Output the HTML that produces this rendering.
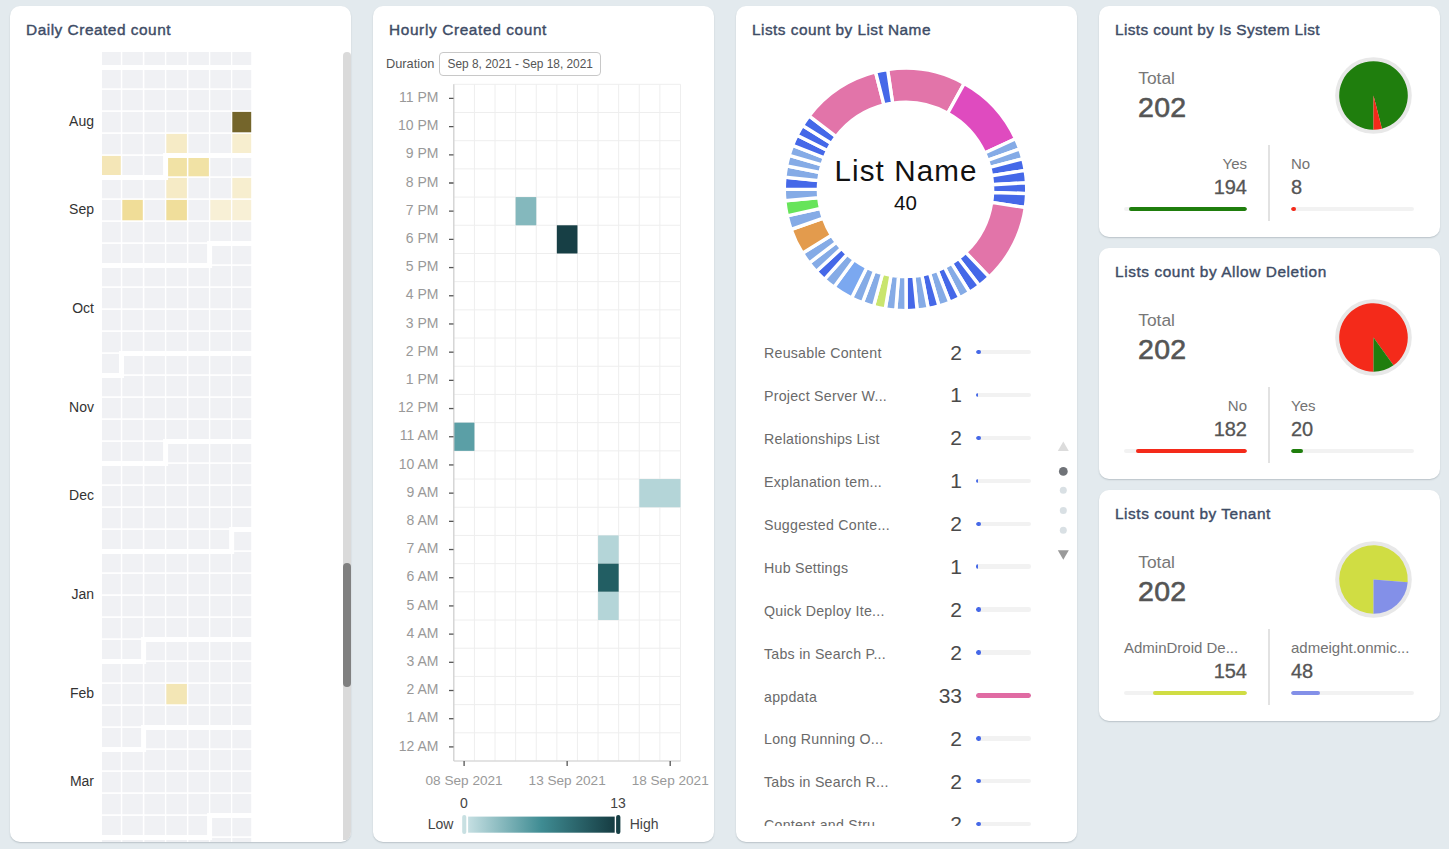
<!DOCTYPE html><html><head><meta charset="utf-8"><style>
*{box-sizing:border-box;margin:0;padding:0}
html,body{width:1449px;height:849px;overflow:hidden;background:#e3eaee;font-family:"Liberation Sans",sans-serif}
.card{position:absolute;background:#fff;border-radius:10px;overflow:hidden;box-shadow:0 1px 1.5px rgba(40,60,70,0.22)}
.title{position:absolute;left:16px;top:15px;font-size:15.4px;color:#3e4c66;-webkit-text-stroke:0.4px #3e4c66;white-space:nowrap}
.abs{position:absolute;left:0;top:0}
.clip1{position:absolute;left:0;top:46px;width:333px;height:790px;overflow:hidden}
.cal{position:absolute;left:0;top:-46px}
.mlab{position:absolute;left:0;width:84px;text-align:right;font-size:14px;color:#333;line-height:18px;margin-top:-46px}
.sbtrack{position:absolute;left:333px;top:46px;width:8px;height:788px;background:#dadada;border-radius:4px 4px 0 0}
.sbthumb{position:absolute;left:333px;top:557px;width:8px;height:124px;background:#808080;border-radius:4px}
.ylab{font-size:14px;fill:#999}
.xlab{font-size:13.6px;fill:#999}
.leg{font-size:14px;fill:#444}
.dur{position:absolute;left:13px;top:50px;font-size:12.8px;color:#555;line-height:16px}
.durbox{position:absolute;left:66px;top:46px;width:162px;height:24px;border:1px solid #c8c8c8;border-radius:4px;font-size:11.9px;color:#555;line-height:22px;padding-left:7.5px;white-space:nowrap}
.dn1{font-size:29.6px;fill:#111;letter-spacing:1.1px}
.dn2{font-size:20.5px;fill:#111}
.lclip{position:absolute;left:0;top:300px;width:341px;height:520px;overflow:hidden}
.lrow{position:absolute;left:0;width:341px;height:24px;margin-top:-300px}
.lname{position:absolute;left:28px;top:3px;font-size:14.2px;letter-spacing:0.25px;color:#6a6a6a;white-space:nowrap;line-height:18px}
.lval{position:absolute;right:115px;top:-0.8px;font-size:21px;color:#4a4a4a;line-height:24px}
.btrack{position:absolute;left:240px;top:8.7px;width:55px;height:4.5px;background:#f2f2f2;border-radius:2.25px;overflow:hidden}
.bfill{position:absolute;left:0;top:0;height:4.5px;border-radius:2.25px}
.tot{position:absolute;left:39.2px;top:62px;font-size:17.4px;color:#777;line-height:20px}
.totv{position:absolute;left:39px;top:85.4px;font-size:28.5px;color:#555;-webkit-text-stroke:0.6px #555;line-height:32px;letter-spacing:0.3px}
.pie{position:absolute;left:235.5px;top:50.5px;width:77px;height:77px}
.divider{position:absolute;left:169px;top:139px;width:2px;height:76px;background:#e2e2e2}
.sn{position:absolute;top:149px;font-size:15px;color:#737373;line-height:18px;white-space:nowrap}
.sv{position:absolute;top:169px;font-size:20px;color:#555;-webkit-text-stroke:0.3px #555;line-height:24px}
.sl{right:193px;text-align:right}
.sr{left:192px}
.strack{position:absolute;top:201px;width:123px;height:4px;background:#f2f2f2;border-radius:2px;overflow:hidden}
.sfill{position:absolute;top:0;height:4px;border-radius:2px}
</style></head><body><div class="card" style="left:10px;top:6px;width:341px;height:836px;"><div class="title" style="letter-spacing:0.52px">Daily Created count</div><div class="clip1"><svg class="cal" width="341" height="836" viewBox="0 0 341 836"><rect x="92.00" y="39.90" width="18.80" height="20.40" fill="#f0f1f4"/><rect x="112.30" y="39.90" width="20.50" height="20.40" fill="#f0f1f4"/><rect x="134.40" y="39.90" width="20.50" height="20.40" fill="#f0f1f4"/><rect x="156.30" y="39.90" width="20.60" height="20.40" fill="#f0f1f4"/><rect x="178.40" y="39.90" width="20.50" height="20.40" fill="#f0f1f4"/><rect x="200.30" y="39.90" width="20.70" height="20.40" fill="#f0f1f4"/><rect x="222.30" y="39.90" width="18.90" height="20.40" fill="#f0f1f4"/><rect x="92.00" y="61.90" width="18.80" height="20.40" fill="#f0f1f4"/><rect x="112.30" y="61.90" width="20.50" height="20.40" fill="#f0f1f4"/><rect x="134.40" y="61.90" width="20.50" height="20.40" fill="#f0f1f4"/><rect x="156.30" y="61.90" width="20.60" height="20.40" fill="#f0f1f4"/><rect x="178.40" y="61.90" width="20.50" height="20.40" fill="#f0f1f4"/><rect x="200.30" y="61.90" width="20.70" height="20.40" fill="#f0f1f4"/><rect x="222.30" y="61.90" width="18.90" height="20.40" fill="#f0f1f4"/><rect x="92.00" y="83.90" width="18.80" height="20.40" fill="#f0f1f4"/><rect x="112.30" y="83.90" width="20.50" height="20.40" fill="#f0f1f4"/><rect x="134.40" y="83.90" width="20.50" height="20.40" fill="#f0f1f4"/><rect x="156.30" y="83.90" width="20.60" height="20.40" fill="#f0f1f4"/><rect x="178.40" y="83.90" width="20.50" height="20.40" fill="#f0f1f4"/><rect x="200.30" y="83.90" width="20.70" height="20.40" fill="#f0f1f4"/><rect x="222.30" y="83.90" width="18.90" height="20.40" fill="#f0f1f4"/><rect x="92.00" y="105.90" width="18.80" height="20.40" fill="#f0f1f4"/><rect x="112.30" y="105.90" width="20.50" height="20.40" fill="#f0f1f4"/><rect x="134.40" y="105.90" width="20.50" height="20.40" fill="#f0f1f4"/><rect x="156.30" y="105.90" width="20.60" height="20.40" fill="#f0f1f4"/><rect x="178.40" y="105.90" width="20.50" height="20.40" fill="#f0f1f4"/><rect x="200.30" y="105.90" width="20.70" height="20.40" fill="#f0f1f4"/><rect x="222.30" y="105.90" width="18.90" height="20.40" fill="#74652b"/><rect x="92.00" y="127.90" width="18.80" height="20.40" fill="#f0f1f4"/><rect x="112.30" y="127.90" width="20.50" height="20.40" fill="#f0f1f4"/><rect x="134.40" y="127.90" width="20.50" height="20.40" fill="#f0f1f4"/><rect x="156.30" y="127.90" width="20.60" height="20.40" fill="#f6ebc6"/><rect x="178.40" y="127.90" width="20.50" height="20.40" fill="#f0f1f4"/><rect x="200.30" y="127.90" width="20.70" height="20.40" fill="#f0f1f4"/><rect x="222.30" y="127.90" width="18.90" height="20.40" fill="#f7eecf"/><rect x="92.00" y="149.90" width="18.80" height="20.40" fill="#f4e6b7"/><rect x="112.30" y="149.90" width="20.50" height="20.40" fill="#f0f1f4"/><rect x="134.40" y="149.90" width="20.50" height="20.40" fill="#f0f1f4"/><rect x="156.30" y="149.90" width="20.60" height="20.40" fill="#f1e2a5"/><rect x="178.40" y="149.90" width="20.50" height="20.40" fill="#f1e2a5"/><rect x="200.30" y="149.90" width="20.70" height="20.40" fill="#f0f1f4"/><rect x="222.30" y="149.90" width="18.90" height="20.40" fill="#f0f1f4"/><rect x="92.00" y="171.90" width="18.80" height="20.40" fill="#f0f1f4"/><rect x="112.30" y="171.90" width="20.50" height="20.40" fill="#f0f1f4"/><rect x="134.40" y="171.90" width="20.50" height="20.40" fill="#f0f1f4"/><rect x="156.30" y="171.90" width="20.60" height="20.40" fill="#f6ebc6"/><rect x="178.40" y="171.90" width="20.50" height="20.40" fill="#f0f1f4"/><rect x="200.30" y="171.90" width="20.70" height="20.40" fill="#f0f1f4"/><rect x="222.30" y="171.90" width="18.90" height="20.40" fill="#f7eecf"/><rect x="92.00" y="193.90" width="18.80" height="20.40" fill="#f0f1f4"/><rect x="112.30" y="193.90" width="20.50" height="20.40" fill="#f0dd98"/><rect x="134.40" y="193.90" width="20.50" height="20.40" fill="#f0f1f4"/><rect x="156.30" y="193.90" width="20.60" height="20.40" fill="#f0de9b"/><rect x="178.40" y="193.90" width="20.50" height="20.40" fill="#f0f1f4"/><rect x="200.30" y="193.90" width="20.70" height="20.40" fill="#f8f0d6"/><rect x="222.30" y="193.90" width="18.90" height="20.40" fill="#f8f0d6"/><rect x="92.00" y="215.90" width="18.80" height="20.40" fill="#f0f1f4"/><rect x="112.30" y="215.90" width="20.50" height="20.40" fill="#f0f1f4"/><rect x="134.40" y="215.90" width="20.50" height="20.40" fill="#f0f1f4"/><rect x="156.30" y="215.90" width="20.60" height="20.40" fill="#f0f1f4"/><rect x="178.40" y="215.90" width="20.50" height="20.40" fill="#f0f1f4"/><rect x="200.30" y="215.90" width="20.70" height="20.40" fill="#f0f1f4"/><rect x="222.30" y="215.90" width="18.90" height="20.40" fill="#f0f1f4"/><rect x="92.00" y="237.90" width="18.80" height="20.40" fill="#f0f1f4"/><rect x="112.30" y="237.90" width="20.50" height="20.40" fill="#f0f1f4"/><rect x="134.40" y="237.90" width="20.50" height="20.40" fill="#f0f1f4"/><rect x="156.30" y="237.90" width="20.60" height="20.40" fill="#f0f1f4"/><rect x="178.40" y="237.90" width="20.50" height="20.40" fill="#f0f1f4"/><rect x="200.30" y="237.90" width="20.70" height="20.40" fill="#f0f1f4"/><rect x="222.30" y="237.90" width="18.90" height="20.40" fill="#f0f1f4"/><rect x="92.00" y="259.90" width="18.80" height="20.40" fill="#f0f1f4"/><rect x="112.30" y="259.90" width="20.50" height="20.40" fill="#f0f1f4"/><rect x="134.40" y="259.90" width="20.50" height="20.40" fill="#f0f1f4"/><rect x="156.30" y="259.90" width="20.60" height="20.40" fill="#f0f1f4"/><rect x="178.40" y="259.90" width="20.50" height="20.40" fill="#f0f1f4"/><rect x="200.30" y="259.90" width="20.70" height="20.40" fill="#f0f1f4"/><rect x="222.30" y="259.90" width="18.90" height="20.40" fill="#f0f1f4"/><rect x="92.00" y="281.90" width="18.80" height="20.40" fill="#f0f1f4"/><rect x="112.30" y="281.90" width="20.50" height="20.40" fill="#f0f1f4"/><rect x="134.40" y="281.90" width="20.50" height="20.40" fill="#f0f1f4"/><rect x="156.30" y="281.90" width="20.60" height="20.40" fill="#f0f1f4"/><rect x="178.40" y="281.90" width="20.50" height="20.40" fill="#f0f1f4"/><rect x="200.30" y="281.90" width="20.70" height="20.40" fill="#f0f1f4"/><rect x="222.30" y="281.90" width="18.90" height="20.40" fill="#f0f1f4"/><rect x="92.00" y="303.90" width="18.80" height="20.40" fill="#f0f1f4"/><rect x="112.30" y="303.90" width="20.50" height="20.40" fill="#f0f1f4"/><rect x="134.40" y="303.90" width="20.50" height="20.40" fill="#f0f1f4"/><rect x="156.30" y="303.90" width="20.60" height="20.40" fill="#f0f1f4"/><rect x="178.40" y="303.90" width="20.50" height="20.40" fill="#f0f1f4"/><rect x="200.30" y="303.90" width="20.70" height="20.40" fill="#f0f1f4"/><rect x="222.30" y="303.90" width="18.90" height="20.40" fill="#f0f1f4"/><rect x="92.00" y="325.90" width="18.80" height="20.40" fill="#f0f1f4"/><rect x="112.30" y="325.90" width="20.50" height="20.40" fill="#f0f1f4"/><rect x="134.40" y="325.90" width="20.50" height="20.40" fill="#f0f1f4"/><rect x="156.30" y="325.90" width="20.60" height="20.40" fill="#f0f1f4"/><rect x="178.40" y="325.90" width="20.50" height="20.40" fill="#f0f1f4"/><rect x="200.30" y="325.90" width="20.70" height="20.40" fill="#f0f1f4"/><rect x="222.30" y="325.90" width="18.90" height="20.40" fill="#f0f1f4"/><rect x="92.00" y="347.90" width="18.80" height="20.40" fill="#f0f1f4"/><rect x="112.30" y="347.90" width="20.50" height="20.40" fill="#f0f1f4"/><rect x="134.40" y="347.90" width="20.50" height="20.40" fill="#f0f1f4"/><rect x="156.30" y="347.90" width="20.60" height="20.40" fill="#f0f1f4"/><rect x="178.40" y="347.90" width="20.50" height="20.40" fill="#f0f1f4"/><rect x="200.30" y="347.90" width="20.70" height="20.40" fill="#f0f1f4"/><rect x="222.30" y="347.90" width="18.90" height="20.40" fill="#f0f1f4"/><rect x="92.00" y="369.90" width="18.80" height="20.40" fill="#f0f1f4"/><rect x="112.30" y="369.90" width="20.50" height="20.40" fill="#f0f1f4"/><rect x="134.40" y="369.90" width="20.50" height="20.40" fill="#f0f1f4"/><rect x="156.30" y="369.90" width="20.60" height="20.40" fill="#f0f1f4"/><rect x="178.40" y="369.90" width="20.50" height="20.40" fill="#f0f1f4"/><rect x="200.30" y="369.90" width="20.70" height="20.40" fill="#f0f1f4"/><rect x="222.30" y="369.90" width="18.90" height="20.40" fill="#f0f1f4"/><rect x="92.00" y="391.90" width="18.80" height="20.40" fill="#f0f1f4"/><rect x="112.30" y="391.90" width="20.50" height="20.40" fill="#f0f1f4"/><rect x="134.40" y="391.90" width="20.50" height="20.40" fill="#f0f1f4"/><rect x="156.30" y="391.90" width="20.60" height="20.40" fill="#f0f1f4"/><rect x="178.40" y="391.90" width="20.50" height="20.40" fill="#f0f1f4"/><rect x="200.30" y="391.90" width="20.70" height="20.40" fill="#f0f1f4"/><rect x="222.30" y="391.90" width="18.90" height="20.40" fill="#f0f1f4"/><rect x="92.00" y="413.90" width="18.80" height="20.40" fill="#f0f1f4"/><rect x="112.30" y="413.90" width="20.50" height="20.40" fill="#f0f1f4"/><rect x="134.40" y="413.90" width="20.50" height="20.40" fill="#f0f1f4"/><rect x="156.30" y="413.90" width="20.60" height="20.40" fill="#f0f1f4"/><rect x="178.40" y="413.90" width="20.50" height="20.40" fill="#f0f1f4"/><rect x="200.30" y="413.90" width="20.70" height="20.40" fill="#f0f1f4"/><rect x="222.30" y="413.90" width="18.90" height="20.40" fill="#f0f1f4"/><rect x="92.00" y="435.90" width="18.80" height="20.40" fill="#f0f1f4"/><rect x="112.30" y="435.90" width="20.50" height="20.40" fill="#f0f1f4"/><rect x="134.40" y="435.90" width="20.50" height="20.40" fill="#f0f1f4"/><rect x="156.30" y="435.90" width="20.60" height="20.40" fill="#f0f1f4"/><rect x="178.40" y="435.90" width="20.50" height="20.40" fill="#f0f1f4"/><rect x="200.30" y="435.90" width="20.70" height="20.40" fill="#f0f1f4"/><rect x="222.30" y="435.90" width="18.90" height="20.40" fill="#f0f1f4"/><rect x="92.00" y="457.90" width="18.80" height="20.40" fill="#f0f1f4"/><rect x="112.30" y="457.90" width="20.50" height="20.40" fill="#f0f1f4"/><rect x="134.40" y="457.90" width="20.50" height="20.40" fill="#f0f1f4"/><rect x="156.30" y="457.90" width="20.60" height="20.40" fill="#f0f1f4"/><rect x="178.40" y="457.90" width="20.50" height="20.40" fill="#f0f1f4"/><rect x="200.30" y="457.90" width="20.70" height="20.40" fill="#f0f1f4"/><rect x="222.30" y="457.90" width="18.90" height="20.40" fill="#f0f1f4"/><rect x="92.00" y="479.90" width="18.80" height="20.40" fill="#f0f1f4"/><rect x="112.30" y="479.90" width="20.50" height="20.40" fill="#f0f1f4"/><rect x="134.40" y="479.90" width="20.50" height="20.40" fill="#f0f1f4"/><rect x="156.30" y="479.90" width="20.60" height="20.40" fill="#f0f1f4"/><rect x="178.40" y="479.90" width="20.50" height="20.40" fill="#f0f1f4"/><rect x="200.30" y="479.90" width="20.70" height="20.40" fill="#f0f1f4"/><rect x="222.30" y="479.90" width="18.90" height="20.40" fill="#f0f1f4"/><rect x="92.00" y="501.90" width="18.80" height="20.40" fill="#f0f1f4"/><rect x="112.30" y="501.90" width="20.50" height="20.40" fill="#f0f1f4"/><rect x="134.40" y="501.90" width="20.50" height="20.40" fill="#f0f1f4"/><rect x="156.30" y="501.90" width="20.60" height="20.40" fill="#f0f1f4"/><rect x="178.40" y="501.90" width="20.50" height="20.40" fill="#f0f1f4"/><rect x="200.30" y="501.90" width="20.70" height="20.40" fill="#f0f1f4"/><rect x="222.30" y="501.90" width="18.90" height="20.40" fill="#f0f1f4"/><rect x="92.00" y="523.90" width="18.80" height="20.40" fill="#f0f1f4"/><rect x="112.30" y="523.90" width="20.50" height="20.40" fill="#f0f1f4"/><rect x="134.40" y="523.90" width="20.50" height="20.40" fill="#f0f1f4"/><rect x="156.30" y="523.90" width="20.60" height="20.40" fill="#f0f1f4"/><rect x="178.40" y="523.90" width="20.50" height="20.40" fill="#f0f1f4"/><rect x="200.30" y="523.90" width="20.70" height="20.40" fill="#f0f1f4"/><rect x="222.30" y="523.90" width="18.90" height="20.40" fill="#f0f1f4"/><rect x="92.00" y="545.90" width="18.80" height="20.40" fill="#f0f1f4"/><rect x="112.30" y="545.90" width="20.50" height="20.40" fill="#f0f1f4"/><rect x="134.40" y="545.90" width="20.50" height="20.40" fill="#f0f1f4"/><rect x="156.30" y="545.90" width="20.60" height="20.40" fill="#f0f1f4"/><rect x="178.40" y="545.90" width="20.50" height="20.40" fill="#f0f1f4"/><rect x="200.30" y="545.90" width="20.70" height="20.40" fill="#f0f1f4"/><rect x="222.30" y="545.90" width="18.90" height="20.40" fill="#f0f1f4"/><rect x="92.00" y="567.90" width="18.80" height="20.40" fill="#f0f1f4"/><rect x="112.30" y="567.90" width="20.50" height="20.40" fill="#f0f1f4"/><rect x="134.40" y="567.90" width="20.50" height="20.40" fill="#f0f1f4"/><rect x="156.30" y="567.90" width="20.60" height="20.40" fill="#f0f1f4"/><rect x="178.40" y="567.90" width="20.50" height="20.40" fill="#f0f1f4"/><rect x="200.30" y="567.90" width="20.70" height="20.40" fill="#f0f1f4"/><rect x="222.30" y="567.90" width="18.90" height="20.40" fill="#f0f1f4"/><rect x="92.00" y="589.90" width="18.80" height="20.40" fill="#f0f1f4"/><rect x="112.30" y="589.90" width="20.50" height="20.40" fill="#f0f1f4"/><rect x="134.40" y="589.90" width="20.50" height="20.40" fill="#f0f1f4"/><rect x="156.30" y="589.90" width="20.60" height="20.40" fill="#f0f1f4"/><rect x="178.40" y="589.90" width="20.50" height="20.40" fill="#f0f1f4"/><rect x="200.30" y="589.90" width="20.70" height="20.40" fill="#f0f1f4"/><rect x="222.30" y="589.90" width="18.90" height="20.40" fill="#f0f1f4"/><rect x="92.00" y="611.90" width="18.80" height="20.40" fill="#f0f1f4"/><rect x="112.30" y="611.90" width="20.50" height="20.40" fill="#f0f1f4"/><rect x="134.40" y="611.90" width="20.50" height="20.40" fill="#f0f1f4"/><rect x="156.30" y="611.90" width="20.60" height="20.40" fill="#f0f1f4"/><rect x="178.40" y="611.90" width="20.50" height="20.40" fill="#f0f1f4"/><rect x="200.30" y="611.90" width="20.70" height="20.40" fill="#f0f1f4"/><rect x="222.30" y="611.90" width="18.90" height="20.40" fill="#f0f1f4"/><rect x="92.00" y="633.90" width="18.80" height="20.40" fill="#f0f1f4"/><rect x="112.30" y="633.90" width="20.50" height="20.40" fill="#f0f1f4"/><rect x="134.40" y="633.90" width="20.50" height="20.40" fill="#f0f1f4"/><rect x="156.30" y="633.90" width="20.60" height="20.40" fill="#f0f1f4"/><rect x="178.40" y="633.90" width="20.50" height="20.40" fill="#f0f1f4"/><rect x="200.30" y="633.90" width="20.70" height="20.40" fill="#f0f1f4"/><rect x="222.30" y="633.90" width="18.90" height="20.40" fill="#f0f1f4"/><rect x="92.00" y="655.90" width="18.80" height="20.40" fill="#f0f1f4"/><rect x="112.30" y="655.90" width="20.50" height="20.40" fill="#f0f1f4"/><rect x="134.40" y="655.90" width="20.50" height="20.40" fill="#f0f1f4"/><rect x="156.30" y="655.90" width="20.60" height="20.40" fill="#f0f1f4"/><rect x="178.40" y="655.90" width="20.50" height="20.40" fill="#f0f1f4"/><rect x="200.30" y="655.90" width="20.70" height="20.40" fill="#f0f1f4"/><rect x="222.30" y="655.90" width="18.90" height="20.40" fill="#f0f1f4"/><rect x="92.00" y="677.90" width="18.80" height="20.40" fill="#f0f1f4"/><rect x="112.30" y="677.90" width="20.50" height="20.40" fill="#f0f1f4"/><rect x="134.40" y="677.90" width="20.50" height="20.40" fill="#f0f1f4"/><rect x="156.30" y="677.90" width="20.60" height="20.40" fill="#f3e6b5"/><rect x="178.40" y="677.90" width="20.50" height="20.40" fill="#f0f1f4"/><rect x="200.30" y="677.90" width="20.70" height="20.40" fill="#f0f1f4"/><rect x="222.30" y="677.90" width="18.90" height="20.40" fill="#f0f1f4"/><rect x="92.00" y="699.90" width="18.80" height="20.40" fill="#f0f1f4"/><rect x="112.30" y="699.90" width="20.50" height="20.40" fill="#f0f1f4"/><rect x="134.40" y="699.90" width="20.50" height="20.40" fill="#f0f1f4"/><rect x="156.30" y="699.90" width="20.60" height="20.40" fill="#f0f1f4"/><rect x="178.40" y="699.90" width="20.50" height="20.40" fill="#f0f1f4"/><rect x="200.30" y="699.90" width="20.70" height="20.40" fill="#f0f1f4"/><rect x="222.30" y="699.90" width="18.90" height="20.40" fill="#f0f1f4"/><rect x="92.00" y="721.90" width="18.80" height="20.40" fill="#f0f1f4"/><rect x="112.30" y="721.90" width="20.50" height="20.40" fill="#f0f1f4"/><rect x="134.40" y="721.90" width="20.50" height="20.40" fill="#f0f1f4"/><rect x="156.30" y="721.90" width="20.60" height="20.40" fill="#f0f1f4"/><rect x="178.40" y="721.90" width="20.50" height="20.40" fill="#f0f1f4"/><rect x="200.30" y="721.90" width="20.70" height="20.40" fill="#f0f1f4"/><rect x="222.30" y="721.90" width="18.90" height="20.40" fill="#f0f1f4"/><rect x="92.00" y="743.90" width="18.80" height="20.40" fill="#f0f1f4"/><rect x="112.30" y="743.90" width="20.50" height="20.40" fill="#f0f1f4"/><rect x="134.40" y="743.90" width="20.50" height="20.40" fill="#f0f1f4"/><rect x="156.30" y="743.90" width="20.60" height="20.40" fill="#f0f1f4"/><rect x="178.40" y="743.90" width="20.50" height="20.40" fill="#f0f1f4"/><rect x="200.30" y="743.90" width="20.70" height="20.40" fill="#f0f1f4"/><rect x="222.30" y="743.90" width="18.90" height="20.40" fill="#f0f1f4"/><rect x="92.00" y="765.90" width="18.80" height="20.40" fill="#f0f1f4"/><rect x="112.30" y="765.90" width="20.50" height="20.40" fill="#f0f1f4"/><rect x="134.40" y="765.90" width="20.50" height="20.40" fill="#f0f1f4"/><rect x="156.30" y="765.90" width="20.60" height="20.40" fill="#f0f1f4"/><rect x="178.40" y="765.90" width="20.50" height="20.40" fill="#f0f1f4"/><rect x="200.30" y="765.90" width="20.70" height="20.40" fill="#f0f1f4"/><rect x="222.30" y="765.90" width="18.90" height="20.40" fill="#f0f1f4"/><rect x="92.00" y="787.90" width="18.80" height="20.40" fill="#f0f1f4"/><rect x="112.30" y="787.90" width="20.50" height="20.40" fill="#f0f1f4"/><rect x="134.40" y="787.90" width="20.50" height="20.40" fill="#f0f1f4"/><rect x="156.30" y="787.90" width="20.60" height="20.40" fill="#f0f1f4"/><rect x="178.40" y="787.90" width="20.50" height="20.40" fill="#f0f1f4"/><rect x="200.30" y="787.90" width="20.70" height="20.40" fill="#f0f1f4"/><rect x="222.30" y="787.90" width="18.90" height="20.40" fill="#f0f1f4"/><rect x="92.00" y="809.90" width="18.80" height="20.40" fill="#f0f1f4"/><rect x="112.30" y="809.90" width="20.50" height="20.40" fill="#f0f1f4"/><rect x="134.40" y="809.90" width="20.50" height="20.40" fill="#f0f1f4"/><rect x="156.30" y="809.90" width="20.60" height="20.40" fill="#f0f1f4"/><rect x="178.40" y="809.90" width="20.50" height="20.40" fill="#f0f1f4"/><rect x="200.30" y="809.90" width="20.70" height="20.40" fill="#f0f1f4"/><rect x="222.30" y="809.90" width="18.90" height="20.40" fill="#f0f1f4"/><rect x="92.00" y="831.90" width="18.80" height="20.40" fill="#f0f1f4"/><rect x="112.30" y="831.90" width="20.50" height="20.40" fill="#f0f1f4"/><rect x="134.40" y="831.90" width="20.50" height="20.40" fill="#f0f1f4"/><rect x="156.30" y="831.90" width="20.60" height="20.40" fill="#f0f1f4"/><rect x="178.40" y="831.90" width="20.50" height="20.40" fill="#f0f1f4"/><rect x="200.30" y="831.90" width="20.70" height="20.40" fill="#f0f1f4"/><rect x="222.30" y="831.90" width="18.90" height="20.40" fill="#f0f1f4"/><rect x="92.00" y="853.90" width="18.80" height="20.40" fill="#f0f1f4"/><rect x="112.30" y="853.90" width="20.50" height="20.40" fill="#f0f1f4"/><rect x="134.40" y="853.90" width="20.50" height="20.40" fill="#f0f1f4"/><rect x="156.30" y="853.90" width="20.60" height="20.40" fill="#f0f1f4"/><rect x="178.40" y="853.90" width="20.50" height="20.40" fill="#f0f1f4"/><rect x="200.30" y="853.90" width="20.70" height="20.40" fill="#f0f1f4"/><rect x="222.30" y="853.90" width="18.90" height="20.40" fill="#f0f1f4"/><path d="M89.00,61.50 H244.20 M89.00,171.50 H155.60 V149.50 H244.20 M89.00,259.50 H199.60 V237.50 H244.20 M89.00,369.50 H111.55 V347.50 H244.20 M89.00,457.50 H155.60 V435.50 H244.20 M89.00,545.50 H221.65 V523.50 H244.20 M89.00,655.50 H133.60 V633.50 H244.20 M89.00,743.50 H133.60 V721.50 H244.20 M89.00,831.50 H199.60 V809.50 H244.20" stroke="#fff" stroke-width="5" fill="none"/></svg><div class="mlab" style="top:106px">Aug</div><div class="mlab" style="top:194px">Sep</div><div class="mlab" style="top:293px">Oct</div><div class="mlab" style="top:392px">Nov</div><div class="mlab" style="top:480px">Dec</div><div class="mlab" style="top:579px">Jan</div><div class="mlab" style="top:678px">Feb</div><div class="mlab" style="top:766px">Mar</div></div><div class="sbtrack"></div><div class="sbthumb"></div></div><div class="card" style="left:373px;top:6px;width:341px;height:836px;"><div class="title" style="letter-spacing:0.63px">Hourly Created count</div><div class="dur">Duration</div><div class="durbox">Sep 8, 2021 - Sep 18, 2021</div><svg class="abs" width="341" height="836"><line x1="80.80" y1="78.30" x2="80.80" y2="755.00" stroke="#eeeeee" stroke-width="1"/><line x1="101.41" y1="78.30" x2="101.41" y2="755.00" stroke="#eeeeee" stroke-width="1"/><line x1="122.02" y1="78.30" x2="122.02" y2="755.00" stroke="#eeeeee" stroke-width="1"/><line x1="142.63" y1="78.30" x2="142.63" y2="755.00" stroke="#eeeeee" stroke-width="1"/><line x1="163.24" y1="78.30" x2="163.24" y2="755.00" stroke="#eeeeee" stroke-width="1"/><line x1="183.85" y1="78.30" x2="183.85" y2="755.00" stroke="#eeeeee" stroke-width="1"/><line x1="204.45" y1="78.30" x2="204.45" y2="755.00" stroke="#eeeeee" stroke-width="1"/><line x1="225.06" y1="78.30" x2="225.06" y2="755.00" stroke="#eeeeee" stroke-width="1"/><line x1="245.67" y1="78.30" x2="245.67" y2="755.00" stroke="#eeeeee" stroke-width="1"/><line x1="266.28" y1="78.30" x2="266.28" y2="755.00" stroke="#eeeeee" stroke-width="1"/><line x1="286.89" y1="78.30" x2="286.89" y2="755.00" stroke="#eeeeee" stroke-width="1"/><line x1="307.50" y1="78.30" x2="307.50" y2="755.00" stroke="#eeeeee" stroke-width="1"/><line x1="80.80" y1="78.30" x2="307.50" y2="78.30" stroke="#eeeeee" stroke-width="1"/><line x1="80.80" y1="106.50" x2="307.50" y2="106.50" stroke="#eeeeee" stroke-width="1"/><line x1="80.80" y1="134.69" x2="307.50" y2="134.69" stroke="#eeeeee" stroke-width="1"/><line x1="80.80" y1="162.89" x2="307.50" y2="162.89" stroke="#eeeeee" stroke-width="1"/><line x1="80.80" y1="191.08" x2="307.50" y2="191.08" stroke="#eeeeee" stroke-width="1"/><line x1="80.80" y1="219.28" x2="307.50" y2="219.28" stroke="#eeeeee" stroke-width="1"/><line x1="80.80" y1="247.48" x2="307.50" y2="247.48" stroke="#eeeeee" stroke-width="1"/><line x1="80.80" y1="275.67" x2="307.50" y2="275.67" stroke="#eeeeee" stroke-width="1"/><line x1="80.80" y1="303.87" x2="307.50" y2="303.87" stroke="#eeeeee" stroke-width="1"/><line x1="80.80" y1="332.06" x2="307.50" y2="332.06" stroke="#eeeeee" stroke-width="1"/><line x1="80.80" y1="360.26" x2="307.50" y2="360.26" stroke="#eeeeee" stroke-width="1"/><line x1="80.80" y1="388.45" x2="307.50" y2="388.45" stroke="#eeeeee" stroke-width="1"/><line x1="80.80" y1="416.65" x2="307.50" y2="416.65" stroke="#eeeeee" stroke-width="1"/><line x1="80.80" y1="444.85" x2="307.50" y2="444.85" stroke="#eeeeee" stroke-width="1"/><line x1="80.80" y1="473.04" x2="307.50" y2="473.04" stroke="#eeeeee" stroke-width="1"/><line x1="80.80" y1="501.24" x2="307.50" y2="501.24" stroke="#eeeeee" stroke-width="1"/><line x1="80.80" y1="529.43" x2="307.50" y2="529.43" stroke="#eeeeee" stroke-width="1"/><line x1="80.80" y1="557.63" x2="307.50" y2="557.63" stroke="#eeeeee" stroke-width="1"/><line x1="80.80" y1="585.83" x2="307.50" y2="585.83" stroke="#eeeeee" stroke-width="1"/><line x1="80.80" y1="614.02" x2="307.50" y2="614.02" stroke="#eeeeee" stroke-width="1"/><line x1="80.80" y1="642.22" x2="307.50" y2="642.22" stroke="#eeeeee" stroke-width="1"/><line x1="80.80" y1="670.41" x2="307.50" y2="670.41" stroke="#eeeeee" stroke-width="1"/><line x1="80.80" y1="698.61" x2="307.50" y2="698.61" stroke="#eeeeee" stroke-width="1"/><line x1="80.80" y1="726.80" x2="307.50" y2="726.80" stroke="#eeeeee" stroke-width="1"/><line x1="80.80" y1="755.00" x2="307.50" y2="755.00" stroke="#eeeeee" stroke-width="1"/><rect x="142.63" y="191.08" width="20.61" height="28.20" fill="#84b8bd"/><rect x="183.85" y="219.28" width="20.61" height="28.20" fill="#173f45"/><rect x="80.80" y="416.65" width="20.61" height="28.20" fill="#5b9fa6"/><rect x="266.28" y="473.04" width="41.22" height="28.20" fill="#b4d5d8"/><rect x="225.06" y="529.43" width="20.61" height="28.20" fill="#b4d5d8"/><rect x="225.06" y="557.63" width="20.61" height="28.20" fill="#225e63"/><rect x="225.06" y="585.83" width="20.61" height="28.20" fill="#b4d5d8"/><line x1="80.80" y1="78.30" x2="80.80" y2="755.00" stroke="#cfcfcf" stroke-width="1.2"/><line x1="80.80" y1="755.00" x2="307.50" y2="755.00" stroke="#cfcfcf" stroke-width="1.2"/><line x1="76" y1="92.40" x2="80.5" y2="92.40" stroke="#555" stroke-width="1.3"/><text x="65.5" y="96.10" text-anchor="end" class="ylab">11 PM</text><line x1="76" y1="120.59" x2="80.5" y2="120.59" stroke="#555" stroke-width="1.3"/><text x="65.5" y="124.29" text-anchor="end" class="ylab">10 PM</text><line x1="76" y1="148.79" x2="80.5" y2="148.79" stroke="#555" stroke-width="1.3"/><text x="65.5" y="152.49" text-anchor="end" class="ylab">9 PM</text><line x1="76" y1="176.99" x2="80.5" y2="176.99" stroke="#555" stroke-width="1.3"/><text x="65.5" y="180.69" text-anchor="end" class="ylab">8 PM</text><line x1="76" y1="205.18" x2="80.5" y2="205.18" stroke="#555" stroke-width="1.3"/><text x="65.5" y="208.88" text-anchor="end" class="ylab">7 PM</text><line x1="76" y1="233.38" x2="80.5" y2="233.38" stroke="#555" stroke-width="1.3"/><text x="65.5" y="237.08" text-anchor="end" class="ylab">6 PM</text><line x1="76" y1="261.57" x2="80.5" y2="261.57" stroke="#555" stroke-width="1.3"/><text x="65.5" y="265.27" text-anchor="end" class="ylab">5 PM</text><line x1="76" y1="289.77" x2="80.5" y2="289.77" stroke="#555" stroke-width="1.3"/><text x="65.5" y="293.47" text-anchor="end" class="ylab">4 PM</text><line x1="76" y1="317.96" x2="80.5" y2="317.96" stroke="#555" stroke-width="1.3"/><text x="65.5" y="321.66" text-anchor="end" class="ylab">3 PM</text><line x1="76" y1="346.16" x2="80.5" y2="346.16" stroke="#555" stroke-width="1.3"/><text x="65.5" y="349.86" text-anchor="end" class="ylab">2 PM</text><line x1="76" y1="374.36" x2="80.5" y2="374.36" stroke="#555" stroke-width="1.3"/><text x="65.5" y="378.06" text-anchor="end" class="ylab">1 PM</text><line x1="76" y1="402.55" x2="80.5" y2="402.55" stroke="#555" stroke-width="1.3"/><text x="65.5" y="406.25" text-anchor="end" class="ylab">12 PM</text><line x1="76" y1="430.75" x2="80.5" y2="430.75" stroke="#555" stroke-width="1.3"/><text x="65.5" y="434.45" text-anchor="end" class="ylab">11 AM</text><line x1="76" y1="458.94" x2="80.5" y2="458.94" stroke="#555" stroke-width="1.3"/><text x="65.5" y="462.64" text-anchor="end" class="ylab">10 AM</text><line x1="76" y1="487.14" x2="80.5" y2="487.14" stroke="#555" stroke-width="1.3"/><text x="65.5" y="490.84" text-anchor="end" class="ylab">9 AM</text><line x1="76" y1="515.34" x2="80.5" y2="515.34" stroke="#555" stroke-width="1.3"/><text x="65.5" y="519.04" text-anchor="end" class="ylab">8 AM</text><line x1="76" y1="543.53" x2="80.5" y2="543.53" stroke="#555" stroke-width="1.3"/><text x="65.5" y="547.23" text-anchor="end" class="ylab">7 AM</text><line x1="76" y1="571.73" x2="80.5" y2="571.73" stroke="#555" stroke-width="1.3"/><text x="65.5" y="575.43" text-anchor="end" class="ylab">6 AM</text><line x1="76" y1="599.92" x2="80.5" y2="599.92" stroke="#555" stroke-width="1.3"/><text x="65.5" y="603.62" text-anchor="end" class="ylab">5 AM</text><line x1="76" y1="628.12" x2="80.5" y2="628.12" stroke="#555" stroke-width="1.3"/><text x="65.5" y="631.82" text-anchor="end" class="ylab">4 AM</text><line x1="76" y1="656.31" x2="80.5" y2="656.31" stroke="#555" stroke-width="1.3"/><text x="65.5" y="660.01" text-anchor="end" class="ylab">3 AM</text><line x1="76" y1="684.51" x2="80.5" y2="684.51" stroke="#555" stroke-width="1.3"/><text x="65.5" y="688.21" text-anchor="end" class="ylab">2 AM</text><line x1="76" y1="712.71" x2="80.5" y2="712.71" stroke="#555" stroke-width="1.3"/><text x="65.5" y="716.41" text-anchor="end" class="ylab">1 AM</text><line x1="76" y1="740.90" x2="80.5" y2="740.90" stroke="#555" stroke-width="1.3"/><text x="65.5" y="744.60" text-anchor="end" class="ylab">12 AM</text><line x1="91.10" y1="755.00" x2="91.10" y2="760" stroke="#555" stroke-width="1.3"/><text x="91.10" y="779" text-anchor="middle" class="xlab">08 Sep 2021</text><line x1="194.15" y1="755.00" x2="194.15" y2="760" stroke="#555" stroke-width="1.3"/><text x="194.15" y="779" text-anchor="middle" class="xlab">13 Sep 2021</text><line x1="297.20" y1="755.00" x2="297.20" y2="760" stroke="#555" stroke-width="1.3"/><text x="297.20" y="779" text-anchor="middle" class="xlab">18 Sep 2021</text><defs><linearGradient id="lg" x1="0" x2="1" y1="0" y2="0"><stop offset="0" stop-color="#c5dfe2"/><stop offset="0.5" stop-color="#3f8c93"/><stop offset="1" stop-color="#163c42"/></linearGradient></defs><rect x="95.10000000000002" y="810.6" width="146.6" height="16.1" fill="url(#lg)"/><rect x="89.19999999999999" y="809" width="4.1" height="19" rx="2" fill="#c8e0e2"/><rect x="243.10000000000002" y="809" width="4.3" height="19" rx="2" fill="#173f45"/><text x="91" y="802" text-anchor="middle" class="leg">0</text><text x="245" y="802" text-anchor="middle" class="leg">13</text><text x="54.80000000000001" y="822.5" class="leg">Low</text><text x="256.70000000000005" y="822.5" class="leg">High</text></svg></div><div class="card" style="left:736px;top:6px;width:341px;height:836px;"><div class="title" style="letter-spacing:0.47px">Lists count by List Name</div><svg class="abs" width="341" height="330"><path d="M151.59,63.53 A121.2,121.2 0 0 1 228.26,77.40 L211.73,107.22 A87.1,87.1 0 0 0 156.63,97.26 Z" fill="#e274a9" stroke="#fff" stroke-width="3.4" stroke-linejoin="miter"/><path d="M228.26,77.40 A121.2,121.2 0 0 1 279.61,132.75 L248.63,147.00 A87.1,87.1 0 0 0 211.73,107.22 Z" fill="#df4bbf" stroke="#fff" stroke-width="3.4" stroke-linejoin="miter"/><path d="M279.61,132.75 A121.2,121.2 0 0 1 283.75,142.94 L251.60,154.33 A87.1,87.1 0 0 0 248.63,147.00 Z" fill="#85abe6" stroke="#fff" stroke-width="3.4" stroke-linejoin="miter"/><path d="M283.75,142.94 A121.2,121.2 0 0 1 286.79,152.85 L253.79,161.44 A87.1,87.1 0 0 0 251.60,154.33 Z" fill="#85abe6" stroke="#fff" stroke-width="3.4" stroke-linejoin="miter"/><path d="M286.79,152.85 A121.2,121.2 0 0 1 289.21,164.44 L255.53,169.77 A87.1,87.1 0 0 0 253.79,161.44 Z" fill="#4568e8" stroke="#fff" stroke-width="3.4" stroke-linejoin="miter"/><path d="M289.21,164.44 A121.2,121.2 0 0 1 290.52,176.85 L256.47,178.69 A87.1,87.1 0 0 0 255.53,169.77 Z" fill="#4568e8" stroke="#fff" stroke-width="3.4" stroke-linejoin="miter"/><path d="M290.52,176.85 A121.2,121.2 0 0 1 290.63,187.63 L256.55,186.44 A87.1,87.1 0 0 0 256.47,178.69 Z" fill="#4568e8" stroke="#fff" stroke-width="3.4" stroke-linejoin="miter"/><path d="M290.63,187.63 A121.2,121.2 0 0 1 289.34,201.52 L255.62,196.42 A87.1,87.1 0 0 0 256.55,186.44 Z" fill="#4568e8" stroke="#fff" stroke-width="3.4" stroke-linejoin="miter"/><path d="M289.34,201.52 A121.2,121.2 0 0 1 253.23,271.02 L229.68,246.37 A87.1,87.1 0 0 0 255.62,196.42 Z" fill="#e274a9" stroke="#fff" stroke-width="3.4" stroke-linejoin="miter"/><path d="M253.23,271.02 A121.2,121.2 0 0 1 243.28,279.55 L222.52,252.50 A87.1,87.1 0 0 0 229.68,246.37 Z" fill="#4568e8" stroke="#fff" stroke-width="3.4" stroke-linejoin="miter"/><path d="M243.28,279.55 A121.2,121.2 0 0 1 233.55,286.30 L215.53,257.35 A87.1,87.1 0 0 0 222.52,252.50 Z" fill="#4568e8" stroke="#fff" stroke-width="3.4" stroke-linejoin="miter"/><path d="M233.55,286.30 A121.2,121.2 0 0 1 223.77,291.77 L208.50,261.28 A87.1,87.1 0 0 0 215.53,257.35 Z" fill="#85abe6" stroke="#fff" stroke-width="3.4" stroke-linejoin="miter"/><path d="M223.77,291.77 A121.2,121.2 0 0 1 213.72,296.24 L201.28,264.49 A87.1,87.1 0 0 0 208.50,261.28 Z" fill="#4568e8" stroke="#fff" stroke-width="3.4" stroke-linejoin="miter"/><path d="M213.72,296.24 A121.2,121.2 0 0 1 202.91,299.90 L193.51,267.13 A87.1,87.1 0 0 0 201.28,264.49 Z" fill="#85abe6" stroke="#fff" stroke-width="3.4" stroke-linejoin="miter"/><path d="M202.91,299.90 A121.2,121.2 0 0 1 192.21,302.45 L185.82,268.96 A87.1,87.1 0 0 0 193.51,267.13 Z" fill="#4568e8" stroke="#fff" stroke-width="3.4" stroke-linejoin="miter"/><path d="M192.21,302.45 A121.2,121.2 0 0 1 181.12,304.04 L177.85,270.10 A87.1,87.1 0 0 0 185.82,268.96 Z" fill="#85abe6" stroke="#fff" stroke-width="3.4" stroke-linejoin="miter"/><path d="M181.12,304.04 A121.2,121.2 0 0 1 170.13,304.60 L169.96,270.50 A87.1,87.1 0 0 0 177.85,270.10 Z" fill="#4568e8" stroke="#fff" stroke-width="3.4" stroke-linejoin="miter"/><path d="M170.13,304.60 A121.2,121.2 0 0 1 159.78,304.21 L162.51,270.22 A87.1,87.1 0 0 0 169.96,270.50 Z" fill="#85abe6" stroke="#fff" stroke-width="3.4" stroke-linejoin="miter"/><path d="M159.78,304.21 A121.2,121.2 0 0 1 149.29,302.90 L154.97,269.28 A87.1,87.1 0 0 0 162.51,270.22 Z" fill="#85abe6" stroke="#fff" stroke-width="3.4" stroke-linejoin="miter"/><path d="M149.29,302.90 A121.2,121.2 0 0 1 137.52,300.30 L146.52,267.41 A87.1,87.1 0 0 0 154.97,269.28 Z" fill="#c9e56e" stroke="#fff" stroke-width="3.4" stroke-linejoin="miter"/><path d="M137.52,300.30 A121.2,121.2 0 0 1 126.46,296.70 L138.57,264.82 A87.1,87.1 0 0 0 146.52,267.41 Z" fill="#85abe6" stroke="#fff" stroke-width="3.4" stroke-linejoin="miter"/><path d="M126.46,296.70 A121.2,121.2 0 0 1 115.61,291.96 L130.77,261.42 A87.1,87.1 0 0 0 138.57,264.82 Z" fill="#85abe6" stroke="#fff" stroke-width="3.4" stroke-linejoin="miter"/><path d="M115.61,291.96 A121.2,121.2 0 0 1 97.92,281.20 L118.06,253.69 A87.1,87.1 0 0 0 130.77,261.42 Z" fill="#7ba8f0" stroke="#fff" stroke-width="3.4" stroke-linejoin="miter"/><path d="M97.92,281.20 A121.2,121.2 0 0 1 88.40,273.47 L111.22,248.13 A87.1,87.1 0 0 0 118.06,253.69 Z" fill="#85abe6" stroke="#fff" stroke-width="3.4" stroke-linejoin="miter"/><path d="M88.40,273.47 A121.2,121.2 0 0 1 80.29,265.44 L105.39,242.36 A87.1,87.1 0 0 0 111.22,248.13 Z" fill="#4568e8" stroke="#fff" stroke-width="3.4" stroke-linejoin="miter"/><path d="M80.29,265.44 A121.2,121.2 0 0 1 73.22,257.01 L100.31,236.30 A87.1,87.1 0 0 0 105.39,242.36 Z" fill="#85abe6" stroke="#fff" stroke-width="3.4" stroke-linejoin="miter"/><path d="M73.22,257.01 A121.2,121.2 0 0 1 66.49,247.27 L95.47,229.30 A87.1,87.1 0 0 0 100.31,236.30 Z" fill="#85abe6" stroke="#fff" stroke-width="3.4" stroke-linejoin="miter"/><path d="M66.49,247.27 A121.2,121.2 0 0 1 55.11,223.46 L87.29,212.19 A87.1,87.1 0 0 0 95.47,229.30 Z" fill="#e39b4d" stroke="#fff" stroke-width="3.4" stroke-linejoin="miter"/><path d="M55.11,223.46 A121.2,121.2 0 0 1 51.22,209.84 L84.50,202.40 A87.1,87.1 0 0 0 87.29,212.19 Z" fill="#85abe6" stroke="#fff" stroke-width="3.4" stroke-linejoin="miter"/><path d="M51.22,209.84 A121.2,121.2 0 0 1 48.84,194.81 L82.79,191.60 A87.1,87.1 0 0 0 84.50,202.40 Z" fill="#67e45a" stroke="#fff" stroke-width="3.4" stroke-linejoin="miter"/><path d="M48.84,194.81 A121.2,121.2 0 0 1 48.30,183.40 L82.40,183.40 A87.1,87.1 0 0 0 82.79,191.60 Z" fill="#85abe6" stroke="#fff" stroke-width="3.4" stroke-linejoin="miter"/><path d="M48.30,183.40 A121.2,121.2 0 0 1 48.92,171.15 L82.85,174.60 A87.1,87.1 0 0 0 82.40,183.40 Z" fill="#4568e8" stroke="#fff" stroke-width="3.4" stroke-linejoin="miter"/><path d="M48.92,171.15 A121.2,121.2 0 0 1 50.61,159.86 L84.06,166.48 A87.1,87.1 0 0 0 82.85,174.60 Z" fill="#85abe6" stroke="#fff" stroke-width="3.4" stroke-linejoin="miter"/><path d="M50.61,159.86 A121.2,121.2 0 0 1 53.17,149.38 L85.90,158.95 A87.1,87.1 0 0 0 84.06,166.48 Z" fill="#85abe6" stroke="#fff" stroke-width="3.4" stroke-linejoin="miter"/><path d="M53.17,149.38 A121.2,121.2 0 0 1 56.58,139.37 L88.35,151.76 A87.1,87.1 0 0 0 85.90,158.95 Z" fill="#85abe6" stroke="#fff" stroke-width="3.4" stroke-linejoin="miter"/><path d="M56.58,139.37 A121.2,121.2 0 0 1 61.03,129.32 L91.55,144.54 A87.1,87.1 0 0 0 88.35,151.76 Z" fill="#4568e8" stroke="#fff" stroke-width="3.4" stroke-linejoin="miter"/><path d="M61.03,129.32 A121.2,121.2 0 0 1 66.49,119.53 L95.47,137.50 A87.1,87.1 0 0 0 91.55,144.54 Z" fill="#4568e8" stroke="#fff" stroke-width="3.4" stroke-linejoin="miter"/><path d="M66.49,119.53 A121.2,121.2 0 0 1 73.09,109.95 L100.21,130.62 A87.1,87.1 0 0 0 95.47,137.50 Z" fill="#4568e8" stroke="#fff" stroke-width="3.4" stroke-linejoin="miter"/><path d="M73.09,109.95 A121.2,121.2 0 0 1 139.56,65.96 L147.99,99.00 A87.1,87.1 0 0 0 100.21,130.62 Z" fill="#e274a9" stroke="#fff" stroke-width="3.4" stroke-linejoin="miter"/><path d="M139.56,65.96 A121.2,121.2 0 0 1 151.59,63.53 L156.63,97.26 A87.1,87.1 0 0 0 147.99,99.00 Z" fill="#4568e8" stroke="#fff" stroke-width="3.4" stroke-linejoin="miter"/><text x="169.5" y="174.9" text-anchor="middle" class="dn1" dx="0.55">List Name</text><text x="169.5" y="204.4" text-anchor="middle" class="dn2">40</text></svg><div class="lclip"><div class="lrow" style="top:335.3px"><div class="lname">Reusable Content</div><div class="lval">2</div><div class="btrack"><div class="bfill" style="width:4.5px;background:#4568e8"></div></div></div><div class="lrow" style="top:378.2px"><div class="lname">Project Server W...</div><div class="lval">1</div><div class="btrack"><div class="bfill" style="width:2.2px;background:#4568e8"></div></div></div><div class="lrow" style="top:421.1px"><div class="lname">Relationships List</div><div class="lval">2</div><div class="btrack"><div class="bfill" style="width:4.5px;background:#4568e8"></div></div></div><div class="lrow" style="top:464.0px"><div class="lname">Explanation tem...</div><div class="lval">1</div><div class="btrack"><div class="bfill" style="width:2.2px;background:#4568e8"></div></div></div><div class="lrow" style="top:506.9px"><div class="lname">Suggested Conte...</div><div class="lval">2</div><div class="btrack"><div class="bfill" style="width:4.5px;background:#4568e8"></div></div></div><div class="lrow" style="top:549.8px"><div class="lname">Hub Settings</div><div class="lval">1</div><div class="btrack"><div class="bfill" style="width:2.2px;background:#4568e8"></div></div></div><div class="lrow" style="top:592.7px"><div class="lname">Quick Deploy Ite...</div><div class="lval">2</div><div class="btrack"><div class="bfill" style="width:4.5px;background:#4568e8"></div></div></div><div class="lrow" style="top:635.6px"><div class="lname">Tabs in Search P...</div><div class="lval">2</div><div class="btrack"><div class="bfill" style="width:4.5px;background:#4568e8"></div></div></div><div class="lrow" style="top:678.5px"><div class="lname">appdata</div><div class="lval">33</div><div class="btrack"><div class="bfill" style="width:55px;background:#e06ba3"></div></div></div><div class="lrow" style="top:721.4px"><div class="lname">Long Running O...</div><div class="lval">2</div><div class="btrack"><div class="bfill" style="width:4.5px;background:#4568e8"></div></div></div><div class="lrow" style="top:764.3px"><div class="lname">Tabs in Search R...</div><div class="lval">2</div><div class="btrack"><div class="bfill" style="width:4.5px;background:#4568e8"></div></div></div><div class="lrow" style="top:807.2px"><div class="lname">Content and Stru...</div><div class="lval">2</div><div class="btrack"><div class="bfill" style="width:4.5px;background:#4568e8"></div></div></div></div><svg class="abs" width="341" height="836"><path d="M321.79999999999995,445 L332.79999999999995,445 L327.29999999999995,435.5 Z" fill="#dcdcdc"/><circle cx="327.29999999999995" cy="465.4" r="4.4" fill="#707378"/><circle cx="327.29999999999995" cy="484.3" r="3.5" fill="#d9e0e4"/><circle cx="327.29999999999995" cy="504.4" r="3.5" fill="#d9e0e4"/><circle cx="327.29999999999995" cy="524.2" r="3.5" fill="#d9e0e4"/><path d="M321.79999999999995,544.3 L332.79999999999995,544.3 L327.29999999999995,553.8 Z" fill="#9a9a9a"/></svg></div><div class="card" style="left:1099px;top:6px;width:341px;height:231px;"><div class="title" style="letter-spacing:0.37px">Lists count by Is System List</div><div class="tot">Total</div><div class="totv">202</div><div class="pie"><svg width="77" height="77" style="position:absolute;left:0;top:0"><circle cx="38.5" cy="38.5" r="38.3" fill="#e8e8e8"/><path d="M38.5,38.5 L38.50,72.80 A34.3,34.3 0 1 1 46.95,71.74 Z" fill="#1f7e0d"/><path d="M38.5,38.5 L46.95,71.74 A34.3,34.3 0 0 1 38.50,72.80 Z" fill="#f42a1a"/></svg></div><div class="divider"></div><div class="sn sl" style="">Yes</div><div class="sv sl">194</div><div class="strack" style="left:25px"><div class="sfill" style="right:0;width:118.1px;background:#1f7e0d"></div></div><div class="sn sr">No</div><div class="sv sr">8</div><div class="strack" style="left:192px"><div class="sfill" style="left:0;width:4.9px;background:#f42a1a"></div></div></div><div class="card" style="left:1099px;top:248px;width:341px;height:231px;"><div class="title" style="letter-spacing:0.58px">Lists count by Allow Deletion</div><div class="tot">Total</div><div class="totv">202</div><div class="pie"><svg width="77" height="77" style="position:absolute;left:0;top:0"><circle cx="38.5" cy="38.5" r="38.3" fill="#e8e8e8"/><path d="M38.5,38.5 L38.50,72.80 A34.3,34.3 0 1 1 58.49,66.37 Z" fill="#f42a1a"/><path d="M38.5,38.5 L58.49,66.37 A34.3,34.3 0 0 1 38.50,72.80 Z" fill="#1f7e0d"/></svg></div><div class="divider"></div><div class="sn sl" style="">No</div><div class="sv sl">182</div><div class="strack" style="left:25px"><div class="sfill" style="right:0;width:110.8px;background:#f42a1a"></div></div><div class="sn sr">Yes</div><div class="sv sr">20</div><div class="strack" style="left:192px"><div class="sfill" style="left:0;width:12.2px;background:#1f7e0d"></div></div></div><div class="card" style="left:1099px;top:490px;width:341px;height:231px;"><div class="title" style="letter-spacing:0.55px">Lists count by Tenant</div><div class="tot">Total</div><div class="totv">202</div><div class="pie"><svg width="77" height="77" style="position:absolute;left:0;top:0"><circle cx="38.5" cy="38.5" r="38.3" fill="#e8e8e8"/><path d="M38.5,38.5 L38.50,72.80 A34.3,34.3 0 1 1 72.70,41.16 Z" fill="#d0dd43"/><path d="M38.5,38.5 L72.70,41.16 A34.3,34.3 0 0 1 38.50,72.80 Z" fill="#8390e8"/></svg></div><div class="divider"></div><div class="sn sl" style="right:auto;left:25px;text-align:left">AdminDroid De...</div><div class="sv sl">154</div><div class="strack" style="left:25px"><div class="sfill" style="right:0;width:93.8px;background:#d0dd43"></div></div><div class="sn sr">admeight.onmic...</div><div class="sv sr">48</div><div class="strack" style="left:192px"><div class="sfill" style="left:0;width:29.2px;background:#8390e8"></div></div></div></body></html>
